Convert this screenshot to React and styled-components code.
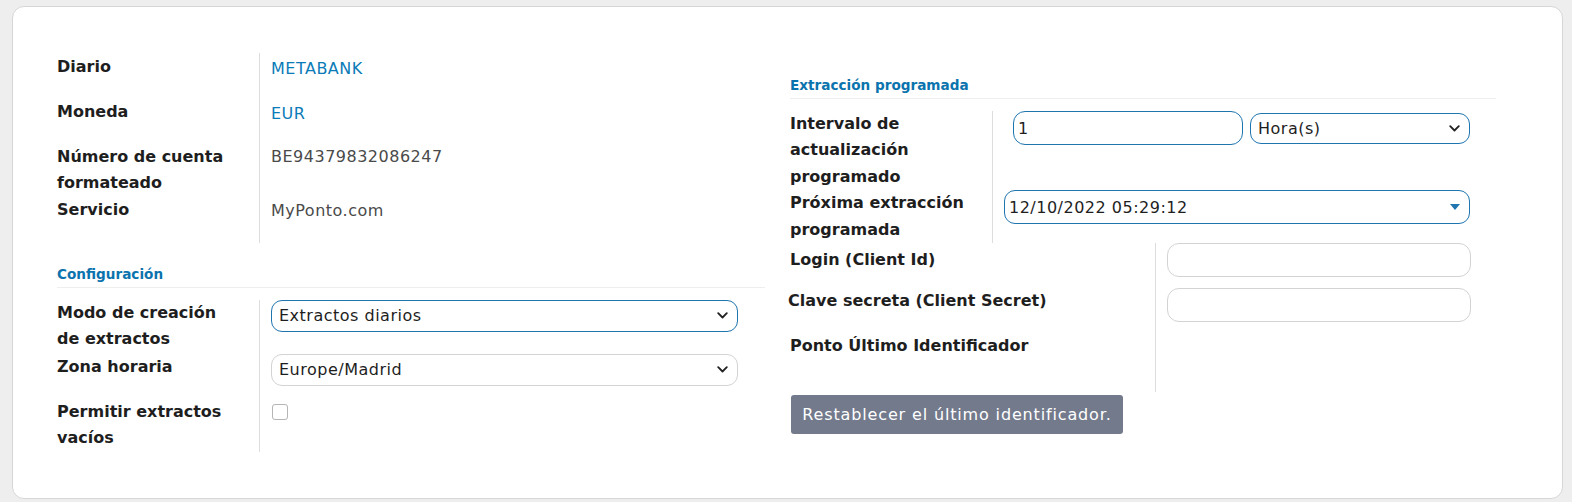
import React from 'react';
import styled, { createGlobalStyle } from 'styled-components';

const GlobalStyle = createGlobalStyle`
  html, body {
    margin: 0;
    padding: 0;
    background: #eeeeee;
  }
  body {
    font-family: 'DejaVu Sans', 'Open Sans', sans-serif;
    color: #222;
  }
`;

const Page = styled.div`
  padding: 6px 9px 5px 12px;
`;

const Card = styled.div`
  background: #fff;
  border: 1px solid #d6d6d6;
  border-radius: 12px;
  padding: 46px 64px 46px 44px;
  display: grid;
  grid-template-columns: 708px 708px;
  column-gap: 25px;
  align-items: start;
`;

const Column = styled.div`
  display: flex;
  flex-direction: column;
`;

const Group = styled.div`
  display: flex;
  flex-direction: column;
`;

const SectionTitle = styled.div`
  font-size: 13.6px;
  font-weight: 700;
  line-height: 20px;
  color: #0b73ad;
  padding-bottom: 3px;
  margin-top: ${({ $top }) => $top}px;
  margin-bottom: 12px;
  margin-right: ${({ $right }) => $right ?? 0}px;
  border-bottom: 1px solid #eeeeee;
`;

const Row = styled.div`
  display: grid;
  grid-template-columns: ${({ $labelWidth }) => $labelWidth}px 1fr;
  min-height: ${({ $minHeight }) => $minHeight ?? 45}px;
`;

const Label = styled.div`
  font-size: 16px;
  font-weight: 700;
  line-height: 26.4px;
  color: #1e1e1e;
  padding-top: ${({ $pad }) => $pad ?? 0}px;
  margin-left: ${({ $shift }) => $shift ?? 0}px;
`;

const Value = styled.div`
  border-left: 1px solid #dddddd;
  padding: 0 ${({ $right }) => $right ?? 27}px 0 ${({ $left }) => $left ?? 11}px;
  display: flex;
  flex-direction: column;
  align-items: flex-start;
`;

const Text = styled.div`
  font-size: 16px;
  line-height: 26px;
  letter-spacing: 0.5px;
  color: ${({ $link }) => ($link ? '#0b7bb8' : '#4a4a4a')};
  padding-top: ${({ $link }) => ($link ? 3 : 1)}px;
`;

const SelectBox = styled.div`
  box-sizing: border-box;
  width: ${({ $width }) => ($width ? `${$width}px` : '100%')};
  height: ${({ $height }) => $height ?? 32}px;
  margin-top: ${({ $top }) => $top ?? 0}px;
  border: 1px solid ${({ $active }) => ($active ? '#1f75b0' : '#d3d3d3')};
  border-radius: 11px;
  display: flex;
  align-items: center;
  justify-content: space-between;
  padding: 0 9px 0 ${({ $padLeft }) => $padLeft ?? 7}px;
  font-size: 16px;
  letter-spacing: 0.5px;
  color: #1e1e1e;
  background: #fff;
`;

const InputBox = styled.div`
  box-sizing: border-box;
  width: ${({ $width }) => $width}px;
  height: 34px;
  margin-left: ${({ $left }) => $left ?? 0}px;
  border: 1px solid ${({ $active }) => ($active ? '#1f75b0' : '#d3d3d3')};
  border-radius: 12px;
  display: flex;
  align-items: center;
  padding-left: 4px;
  font-size: 16px;
  color: #1e1e1e;
`;

const InlineFields = styled.div`
  display: flex;
  align-items: flex-start;
  gap: 7px;
`;

const Checkbox = styled.div`
  width: 14px;
  height: 14px;
  margin-top: 5px;
  margin-left: 1px;
  border: 1px solid #b5b5b5;
  border-radius: 3px;
`;

const Button = styled.button`
  align-self: flex-start;
  margin-top: 3px;
  margin-left: 1px;
  width: 332px;
  height: 39px;
  padding: 0;
  border: none;
  border-radius: 3px;
  background: #737a8c;
  color: #fff;
  font-family: 'DejaVu Sans', 'Open Sans', sans-serif;
  font-size: 16px;
  letter-spacing: 0.85px;
`;

const Chevron = () => (
  <svg width="11" height="7" viewBox="0 0 11 7" fill="none">
    <path d="M1.2 1.2 L5.5 5.5 L9.8 1.2" stroke="#222" strokeWidth="1.8" strokeLinecap="round" strokeLinejoin="round" />
  </svg>
);

const Caret = () => (
  <svg width="10" height="6" viewBox="0 0 10 6">
    <path d="M0 0 H10 L5 6 Z" fill="#1f75b0" />
  </svg>
);

export default function App() {
  return (
    <>
      <GlobalStyle />
      <Page>
        <Card>
          <Column>
            <Group>
              <Row $labelWidth={202}>
                <Label $pad={1}>Diario</Label>
                <Value>
                  <Text $link>METABANK</Text>
                </Value>
              </Row>
              <Row $labelWidth={202}>
                <Label $pad={1}>Moneda</Label>
                <Value>
                  <Text $link>EUR</Text>
                </Value>
              </Row>
              <Row $labelWidth={202}>
                <Label $pad={1}>
                  Número de cuenta
                  <br />
                  formateado
                </Label>
                <Value>
                  <Text>BE94379832086247</Text>
                </Value>
              </Row>
              <Row $labelWidth={202} $minHeight={46}>
                <Label>Servicio</Label>
                <Value>
                  <Text>MyPonto.com</Text>
                </Value>
              </Row>
            </Group>

            <SectionTitle $top={21}>Configuración</SectionTitle>
            <Group>
              <Row $labelWidth={202} $minHeight={54}>
                <Label>
                  Modo de creación
                  <br />
                  de extractos
                </Label>
                <Value>
                  <SelectBox $active>
                    Extractos diarios
                    <Chevron />
                  </SelectBox>
                </Value>
              </Row>
              <Row $labelWidth={202}>
                <Label>Zona horaria</Label>
                <Value>
                  <SelectBox>
                    Europe/Madrid
                    <Chevron />
                  </SelectBox>
                </Value>
              </Row>
              <Row $labelWidth={202}>
                <Label>
                  Permitir extractos
                  <br />
                  vacíos
                </Label>
                <Value>
                  <Checkbox />
                </Value>
              </Row>
            </Group>
          </Column>

          <Column>
            <SectionTitle $top={22} $right={2}>Extracción programada</SectionTitle>
            <Group>
              <Row $labelWidth={202}>
                <Label>
                  Intervalo de
                  <br />
                  actualización
                  <br />
                  programado
                </Label>
                <Value $left={0} $right={28}>
                  <InlineFields>
                    <InputBox $active $width={230} $left={20}>
                      1
                    </InputBox>
                    <SelectBox $active $width={220} $top={2} $height={31}>
                      Hora(s)
                      <Chevron />
                    </SelectBox>
                  </InlineFields>
                </Value>
              </Row>
              <Row $labelWidth={202} $minHeight={52}>
                <Label>
                  Próxima extracción
                  <br />
                  programada
                </Label>
                <Value $left={11} $right={28}>
                  <SelectBox $active $height={34} $padLeft={4}>
                    12/10/2022 05:29:12
                    <Caret />
                  </SelectBox>
                </Value>
              </Row>
            </Group>
            <Group>
              <Row $labelWidth={365}>
                <Label $pad={4}>Login (Client Id)</Label>
                <Value $right={28}>
                  <InputBox $width={304} />
                </Value>
              </Row>
              <Row $labelWidth={365}>
                <Label $shift={-2}>Clave secreta (Client Secret)</Label>
                <Value $right={28}>
                  <InputBox $width={304} />
                </Value>
              </Row>
              <Row $labelWidth={365} $minHeight={59}>
                <Label>Ponto Último Identificador</Label>
                <Value $right={28} />
              </Row>
            </Group>
            <Button>Restablecer el último identificador.</Button>
          </Column>
        </Card>
      </Page>
    </>
  );
}
